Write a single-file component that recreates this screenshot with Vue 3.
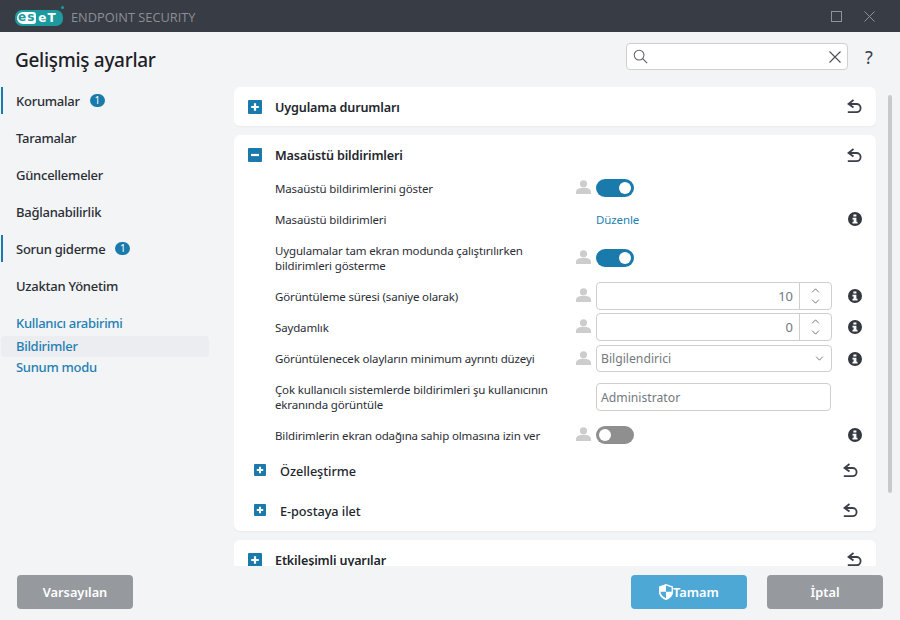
<script setup>
const navMain = [
  { label: 'Korumalar', bar: true, badge: 1 },
  { label: 'Taramalar' },
  { label: 'Güncellemeler' },
  { label: 'Bağlanabilirlik' },
  { label: 'Sorun giderme', bar: true, badge: 1 },
  { label: 'Uzaktan Yönetim' },
]
const navSub = [
  { label: 'Kullanıcı arabirimi', cls: 'first' },
  { label: 'Bildirimler', cls: 'active' },
  { label: 'Sunum modu', cls: '' },
]
const rows = [
  { h: 'r-a', label: ['Masaüstü bildirimlerini göster'], person: true, type: 'toggle', on: true },
  { h: 'r-b', label: ['Masaüstü bildirimleri'], type: 'link', info: true },
  { h: 'r-c', label: ['Uygulamalar tam ekran modunda çalıştırılırken', 'bildirimleri gösterme'], person: true, type: 'toggle', on: true },
  { h: 'r-d', label: ['Görüntüleme süresi (saniye olarak)'], person: true, type: 'spin', value: '10', info: true },
  { h: 'r-e', label: ['Saydamlık'], person: true, type: 'spin', value: '0', info: true },
  { h: 'r-f', label: ['Görüntülenecek olayların minimum ayrıntı düzeyi'], person: true, type: 'select', value: 'Bilgilendirici', info: true },
  { h: 'r-g', label: ['Çok kullanıcılı sistemlerde bildirimleri şu kullanıcının', 'ekranında görüntüle'], type: 'text', value: 'Administrator' },
  { h: 'r-h', label: ['Bildirimlerin ekran odağına sahip olmasına izin ver'], person: true, type: 'toggle', on: false, info: true },
]
</script>

<template>
  <div class="app">
    <header class="titlebar">
      <div class="logo"><span class="logo-es">es</span><span class="logo-et">eT</span><i class="logo-dot"></i></div>
      <span class="product">ENDPOINT SECURITY</span>
      <div class="win-controls">
        <span class="win-max"></span>
        <svg class="win-close" viewBox="0 0 11 11" width="11" height="11"><path d="M.5.5l10 10M10.5.5l-10 10" stroke="#8f939a" stroke-width="1" fill="none"/></svg>
      </div>
    </header>

    <div class="pagehead">
      <h1>Gelişmiş ayarlar</h1>
      <div class="search">
        <svg viewBox="0 0 16 16" width="15" height="15"><circle cx="6.5" cy="6.5" r="5.2" fill="none" stroke="#5c6066" stroke-width="1.1"/><path d="M10.3 10.3l4.8 4.8" stroke="#5c6066" stroke-width="1.3" fill="none"/></svg>
        <span class="grow"></span>
        <svg viewBox="0 0 12 12" width="12" height="12"><path d="M.5.5l11 11M11.5.5l-11 11" stroke="#4a4e55" stroke-width="1.1" fill="none"/></svg>
      </div>
      <span class="help">?</span>
    </div>

    <div class="main">
      <nav class="sidebar">
        <div v-for="n in navMain" :key="n.label" class="nav-item" :class="{ bar: n.bar }">
          <span>{{ n.label }}</span>
          <span v-if="n.badge" class="badge">{{ n.badge }}</span>
        </div>
        <div v-for="n in navSub" :key="n.label" class="nav-sub" :class="n.cls">{{ n.label }}</div>
      </nav>

      <section class="content">
        <div class="card card-collapsed">
          <div class="card-head">
            <svg class="box" viewBox="0 0 14 14"><rect width="14" height="14" rx="1" fill="#1a7aab"/><path d="M7 3.2v7.6M3.2 7h7.6" stroke="#fff" stroke-width="2.2"/></svg>
            <span class="card-title">Uygulama durumları</span>
            <svg class="undo" viewBox="0 0 15 15"><path d="M6.5 1L1.5 5l5 3.6" fill="none" stroke="#3b4048" stroke-width="1.8"/><path d="M2 5h7.5a4 4 0 0 1 0 8.2H.8" fill="none" stroke="#3b4048" stroke-width="1.8"/></svg>
          </div>
        </div>

        <div class="card">
          <div class="card-head head-open">
            <svg class="box" viewBox="0 0 14 14"><rect width="14" height="14" rx="1" fill="#1a7aab"/><path d="M3 7h8" stroke="#fff" stroke-width="2.2"/></svg>
            <span class="card-title">Masaüstü bildirimleri</span>
            <svg class="undo" viewBox="0 0 15 15"><path d="M6.5 1L1.5 5l5 3.6" fill="none" stroke="#3b4048" stroke-width="1.8"/><path d="M2 5h7.5a4 4 0 0 1 0 8.2H.8" fill="none" stroke="#3b4048" stroke-width="1.8"/></svg>
          </div>

          <div v-for="(r, i) in rows" :key="i" class="row" :class="r.h">
            <div class="row-label"><div v-for="l in r.label" :key="l">{{ l }}</div></div>
            <div class="row-person">
              <svg v-if="r.person" viewBox="0 0 15 14" width="15" height="14"><circle cx="7.5" cy="3.8" r="3.6" fill="#cdcdcd"/><path d="M0 14v-2.2c0-2 2-3 4.6-3.7h5.8c2.6.7 4.6 1.7 4.6 3.7V14z" fill="#cdcdcd"/></svg>
            </div>
            <div class="row-control">
              <span v-if="r.type === 'toggle'" class="toggle" :class="{ on: r.on }"><i></i></span>
              <span v-else-if="r.type === 'link'" class="link">Düzenle</span>
              <div v-else-if="r.type === 'spin'" class="field spin">
                <span class="spin-value">{{ r.value }}</span>
                <span class="spin-arrows">
                  <svg viewBox="0 0 10 6" width="9" height="5"><path d="M1 5.2L5 1l4 4.2" fill="none" stroke="#5c6066" stroke-width="1"/></svg>
                  <svg viewBox="0 0 10 6" width="9" height="5"><path d="M1 .8L5 5l4-4.2" fill="none" stroke="#5c6066" stroke-width="1"/></svg>
                </span>
              </div>
              <div v-else-if="r.type === 'select'" class="field select">
                <span class="grow">{{ r.value }}</span>
                <svg viewBox="0 0 10 6" width="9" height="5"><path d="M1 .8L5 5l4-4.2" fill="none" stroke="#5c6066" stroke-width="1"/></svg>
              </div>
              <div v-else class="field text">{{ r.value }}</div>
            </div>
            <div class="row-info">
              <svg v-if="r.info" viewBox="0 0 14 14" width="14" height="14"><circle cx="7" cy="7" r="7" fill="#33373e"/><path d="M5.4 2.4h3v2.1h-3zM4.5 5.7h3.9v4.1h1.1v1.8H4.5V9.8h1.1V7.5H4.5z" fill="#fff"/></svg>
            </div>
          </div>

          <div class="sub-head">
            <svg class="sub-box" viewBox="0 0 12 12"><rect width="12" height="12" rx="1" fill="#1a7aab"/><path d="M6 2.8v6.4M2.8 6h6.4" stroke="#fff" stroke-width="2"/></svg>
            <span class="sub-title">Özelleştirme</span>
            <svg class="undo sub-undo" viewBox="0 0 15 15"><path d="M6.5 1L1.5 5l5 3.6" fill="none" stroke="#3b4048" stroke-width="1.8"/><path d="M2 5h7.5a4 4 0 0 1 0 8.2H.8" fill="none" stroke="#3b4048" stroke-width="1.8"/></svg>
          </div>
          <div class="sub-head">
            <svg class="sub-box" viewBox="0 0 12 12"><rect width="12" height="12" rx="1" fill="#1a7aab"/><path d="M6 2.8v6.4M2.8 6h6.4" stroke="#fff" stroke-width="2"/></svg>
            <span class="sub-title">E-postaya ilet</span>
            <svg class="undo sub-undo" viewBox="0 0 15 15"><path d="M6.5 1L1.5 5l5 3.6" fill="none" stroke="#3b4048" stroke-width="1.8"/><path d="M2 5h7.5a4 4 0 0 1 0 8.2H.8" fill="none" stroke="#3b4048" stroke-width="1.8"/></svg>
          </div>
        </div>

        <div class="card card-collapsed">
          <div class="card-head">
            <svg class="box" viewBox="0 0 14 14"><rect width="14" height="14" rx="1" fill="#1a7aab"/><path d="M7 3.2v7.6M3.2 7h7.6" stroke="#fff" stroke-width="2.2"/></svg>
            <span class="card-title">Etkileşimli uyarılar</span>
            <svg class="undo" viewBox="0 0 15 15"><path d="M6.5 1L1.5 5l5 3.6" fill="none" stroke="#3b4048" stroke-width="1.8"/><path d="M2 5h7.5a4 4 0 0 1 0 8.2H.8" fill="none" stroke="#3b4048" stroke-width="1.8"/></svg>
          </div>
        </div>

        <div class="scrollbar"></div>
      </section>
    </div>

    <footer class="footer">
      <button class="btn btn-grey">Varsayılan</button>
      <span class="grow"></span>
      <button class="btn btn-blue">
        <svg viewBox="0 0 14 16" width="14" height="16"><path d="M7 0l7 2.4V8c0 3.8-3 6.6-7 8-4-1.4-7-4.2-7-8V2.4z" fill="#fff"/><path d="M7 1.6l5.6 1.8v4.4H7zM7 7.8v6.4c-3-1.4-5.4-3.5-5.6-6.4z" fill="#4ea8d6"/></svg>
        <span>Tamam</span>
      </button>
      <button class="btn btn-grey cancel">İptal</button>
    </footer>
  </div>
</template>

<style>
html, body { margin: 0; padding: 0; }
</style>

<style scoped>
.app {
  width: 900px;
  height: 620px;
  display: flex;
  flex-direction: column;
  background: #f3f4f6;
  font-family: "Noto Sans", "Open Sans", sans-serif;
  color: #22262c;
  overflow: hidden;
}
.grow { flex: 1; }

.titlebar {
  height: 32px;
  flex: none;
  background: #383c44;
  display: flex;
  align-items: center;
  padding-left: 15px;
}
.logo {
  position: relative;
  display: flex;
  align-items: center;
  width: 48px;
  height: 16px;
  margin-top: 4px;
  background: #1c9aa0;
  border-radius: 7px;
  font-family: "DejaVu Sans", sans-serif;
  font-weight: 700;
  font-size: 12px;
  line-height: 12px;
}
.logo-es {
  background: #fff;
  color: #1c9aa0;
  height: 12px;
  margin-left: 2px;
  padding: 0 1px;
  border-radius: 6px 3px 3px 6px;
  line-height: 11px;
  letter-spacing: 1px;
}
.logo-et { color: #fff; margin-left: 2px; letter-spacing: 1px; }
.logo-dot {
  position: absolute;
  right: -1px;
  top: -4px;
  width: 3px;
  height: 3px;
  border-radius: 50%;
  background: #1c9aa0;
}
.product {
  margin-left: 8px;
  margin-top: 2px;
  font-family: "Open Sans", sans-serif;
  font-size: 12.8px;
  color: #8b8f96;
}
.win-controls {
  margin-left: auto;
  display: flex;
  align-items: center;
  gap: 22px;
  padding-right: 25px;
}
.win-max {
  width: 11px;
  height: 11px;
  box-sizing: border-box;
  border: 1px solid #8f939a;
}
.pagehead {
  height: 55px;
  flex: none;
  display: flex;
  align-items: center;
  padding: 0 10px 0 15px;
}
h1 {
  margin: 0;
  flex: 1;
  font-size: 19px;
  letter-spacing: -.3px;
  font-weight: 500;
  color: #1c2026;
}
.search {
  width: 222px;
  height: 27px;
  box-sizing: border-box;
  background: #fff;
  border: 1px solid #cfcfcf;
  border-radius: 4px;
  display: flex;
  align-items: center;
  padding: 0 6px;
  margin-top: -6px;
}
.help {
  width: 42px;
  text-align: center;
  font-size: 18px;
  margin-top: -5px;
  color: #3b4048;
}
.main {
  flex: 1;
  display: flex;
  min-height: 0;
}
.sidebar {
  width: 234px;
  box-sizing: border-box;
  flex: none;
  padding-left: 1px;
}
.nav-item {
  height: 27px;
  margin-bottom: 10px;
  padding-left: 15px;
  display: flex;
  align-items: center;
  gap: 10px;
  font-size: 13px;
  letter-spacing: -.25px;
  font-weight: 500;
  color: #2a2e35;
}
.nav-item.bar { box-shadow: inset 2px 0 0 #1a7aab; }
.badge {
  width: 15px;
  height: 13px;
  border-radius: 7px;
  background: #1a7aab;
  color: #fff;
  font-size: 10px;
  line-height: 13px;
  text-align: center;
  font-weight: 400;
  letter-spacing: 0;
}
.nav-sub {
  height: 21px;
  line-height: 21px;
  width: 208px;
  padding-left: 15px;
  box-sizing: border-box;
  font-size: 13px;
  letter-spacing: -.3px;
  font-weight: 500;
  color: #1f7fb3;
  border-radius: 4px;
}
.nav-sub.first { margin-top: 14px; margin-bottom: 2px; }
.nav-sub.active { background: #ecedf0; }
.content {
  position: relative;
  flex: 1;
  min-width: 0;
  overflow: hidden;
  padding-right: 24px;
}
.card {
  background: #fff;
  border-radius: 6px;
  margin-bottom: 9px;
  box-shadow: 0 1px 2px rgba(0, 0, 0, .04);
}
.card-head {
  height: 39px;
  display: flex;
  align-items: center;
  padding: 0 14px;
}
.head-open { height: 37px; padding-top: 3px; box-sizing: border-box; }
.box {
  width: 14px;
  height: 14px;
  flex: none;
  margin-right: 13px;
}
.card-title {
  flex: 1;
  font-size: 12.6px;
  letter-spacing: -.15px;
  font-weight: 600;
  color: #22262c;
  margin-top: 1px;
}
.head-open .card-title { margin-top: 0; }
.undo { width: 15px; height: 15px; flex: none; }
.row {
  display: flex;
  align-items: center;
  padding-left: 41px;
  font-size: 11.5px;
  letter-spacing: -.15px;
  line-height: 15px;
  color: #2a2e35;
}
.r-a { height: 32px; }
.r-b { height: 30px; }
.r-c { height: 48px; }
.r-d { height: 28px; margin-bottom: 3px; }
.r-e { height: 28px; margin-bottom: 4px; }
.r-f { height: 27px; margin-bottom: 11px; }
.r-g { height: 28px; margin-bottom: 9px; }
.r-h { height: 30px; margin-bottom: 1px; }
.row-label { width: 301px; flex: none; }
.row-person {
  width: 20px;
  flex: none;
  display: flex;
  margin-top: -2px;
}
.row-control {
  width: 236px;
  height: 100%;
  flex: none;
  display: flex;
  align-items: center;
}
.row-info {
  width: 14px;
  margin-left: 16px;
  flex: none;
  display: flex;
}
.toggle {
  width: 38px;
  height: 18px;
  border-radius: 9px;
  background: #8f8f8f;
  display: flex;
  align-items: center;
  padding: 0 3px;
  box-sizing: border-box;
}
.toggle i {
  width: 12px;
  height: 12px;
  border-radius: 50%;
  background: #fff;
}
.toggle.on { background: #1a7aab; justify-content: flex-end; }
.link { color: #1f7fb3; font-size: 11.5px; letter-spacing: -.1px; }
.field {
  width: 100%;
  height: 100%;
  box-sizing: border-box;
  border: 1px solid #cfcfcf;
  border-radius: 4px;
  background: #fff;
  display: flex;
  align-items: center;
  font-size: 12.2px;
  letter-spacing: 0;
  color: #74787e;
}
.spin { font-size: 13px; }
.spin-value { flex: 1; text-align: right; padding-right: 6px; }
.spin-arrows {
  width: 31px;
  height: 100%;
  border-left: 1px solid #cfcfcf;
  display: flex;
  flex-direction: column;
  align-items: center;
  justify-content: center;
  gap: 6px;
}
.select, .text { padding: 0 4px; }
.select svg { margin-right: 3px; }
.text { width: 235px; }
.sub-head {
  height: 40px;
  display: flex;
  align-items: center;
  padding: 0 18px 0 20px;
}
.sub-box { width: 12px; height: 12px; flex: none; margin-right: 14px; margin-top: -2px; }
.sub-title { flex: 1; font-size: 12.7px; font-weight: 500; letter-spacing: -.05px; }
.sub-undo { margin-top: -2px; }
.scrollbar {
  position: absolute;
  right: 8px;
  top: 8px;
  width: 4px;
  height: 398px;
  background: #c8c9cb;
  border-radius: 2px;
}
.footer {
  height: 54px;
  flex: none;
  display: flex;
  align-items: center;
  padding: 0 17px 2px;
  box-sizing: border-box;
  background: #f3f4f6;
  position: relative;
}
.btn {
  width: 116px;
  height: 34px;
  border: 0;
  border-radius: 4px;
  font-family: inherit;
  font-size: 12.8px;
  font-weight: 600;
  color: #fff;
  display: flex;
  align-items: center;
  justify-content: center;
  padding: 0;
}
.btn-grey { background: #969a9f; }
.btn-blue { background: #4ea8d6; }
.cancel { margin-left: 20px; }
</style>
